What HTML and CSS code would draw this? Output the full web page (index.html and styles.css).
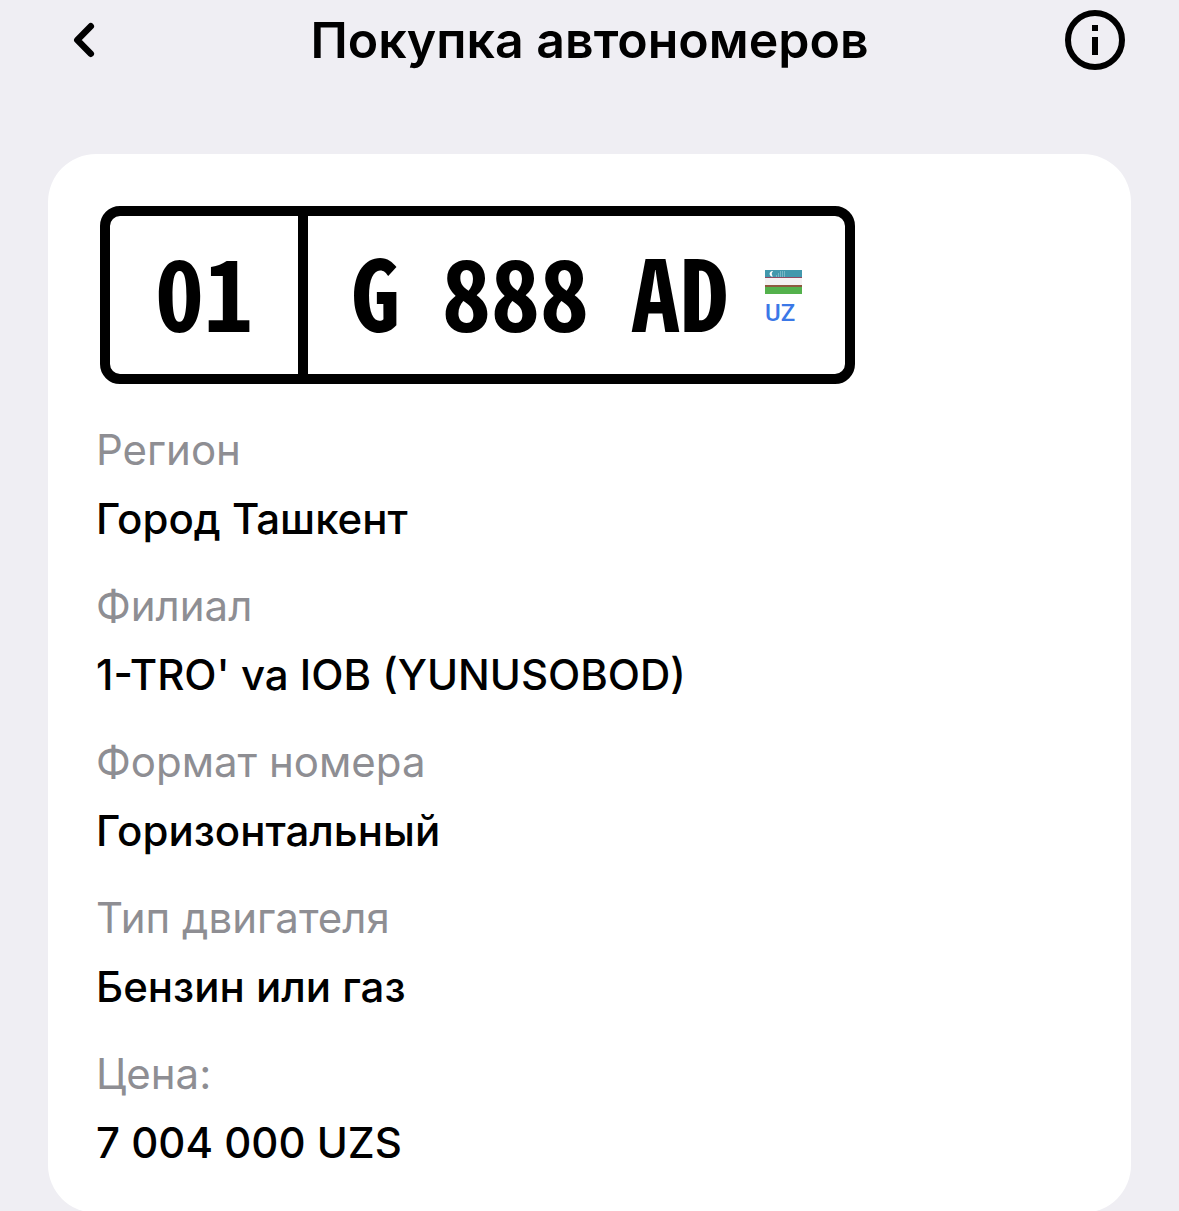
FILE: index.html
```html
<!DOCTYPE html>
<html lang="ru">
<head>
  <meta charset="UTF-8">
  <meta name="viewport" content="width=device-width, initial-scale=1">
  <title>Покупка автономеров</title>
  <link rel="stylesheet" href="styles.css">
</head>
<body>

<header class="topbar">
  <button class="icon-btn" type="button" aria-label="Назад">
    <svg width="60" height="60" viewBox="0 0 60 60" fill="none" stroke="#000" stroke-width="6.5" stroke-linecap="round" stroke-linejoin="round">
      <path d="M36.8 16.3L23.3 30L36.8 43.7"/>
    </svg>
  </button>
  <h1>Покупка автономеров</h1>
  <button class="icon-btn" type="button" aria-label="Информация">
    <svg width="60" height="60" viewBox="0 0 60 60">
      <circle cx="30" cy="30" r="27" fill="none" stroke="#000" stroke-width="6"/>
      <path d="M27 15h6v6h-6zM27 27h6v18h-6z"/>
    </svg>
  </button>
</header>

<main class="card">
  <div class="plate">
    <div class="plate-region">01</div>
    <div class="plate-number">
      <span class="plate-part">G</span>
      <span class="plate-part">888</span>
      <span class="plate-part">AD</span>
      <div class="plate-country">
        <svg width="37" height="24" viewBox="0 0 37 24">
          <rect width="37" height="24" fill="#f5f1f2"/>
          <rect width="37" height="7" fill="#4298ad"/>
          <rect y="7" width="37" height="1" fill="#8f4a63"/>
          <rect y="15" width="37" height="2" fill="#8e5a3f"/>
          <rect y="17" width="37" height="7" fill="#54b14c"/>
          <path d="M8 1.2a2.7 2.7 0 1 0 0 5.2a3.3 3.3 0 0 1 0-5.2z" fill="#fff"/>
          <path d="M15 2h6M13 4h8M11 6h10" stroke="#a9d3dd" stroke-width="1" stroke-dasharray="1 1"/>
        </svg>
        <span>UZ</span>
      </div>
    </div>
  </div>

  <dl class="details">
    <div class="row">
      <dt>Регион</dt>
      <dd>Город Ташкент</dd>
    </div>
    <div class="row">
      <dt>Филиал</dt>
      <dd>1-TRO' va IOB (YUNUSOBOD)</dd>
    </div>
    <div class="row">
      <dt>Формат номера</dt>
      <dd>Горизонтальный</dd>
    </div>
    <div class="row">
      <dt>Тип двигателя</dt>
      <dd>Бензин или газ</dd>
    </div>
    <div class="row">
      <dt>Цена:</dt>
      <dd>7 004 000 UZS</dd>
    </div>
  </dl>
</main>

</body>
</html>
```
FILE: styles.css
```css
* {
  box-sizing: border-box;
}

body {
  margin: 0;
  font-family: Inter, sans-serif;
  background-color: #efeef3;
  color: #000;
}

.topbar {
  display: flex;
  justify-content: space-between;
  align-items: center;
  height: 80px;
  padding: 0 54px;
  margin-bottom: 74px;
}

.topbar h1 {
  margin: 0;
  font-size: 50px;
  line-height: 60px;
  font-weight: 600;
}

.icon-btn {
  display: flex;
  width: 60px;
  height: 60px;
  padding: 0;
  border: none;
  background: none;
  cursor: pointer;
}

.card {
  margin: 0 48px;
  padding: 52px 48px 44px;
  background: #fff;
  border-radius: 48px;
}

.plate {
  display: flex;
  width: fit-content;
  margin-left: 4px;
  border: 10px solid #000;
  border-radius: 20px;
  font-family: "Noto Sans Mono CJK SC", "Noto Sans CJK SC", sans-serif;
  font-feature-settings: "hwid";
  font-size: 98px;
  line-height: 146px;
  font-weight: 700;
}

.plate-region {
  padding: 0 45px 12px;
  border-right: 10px solid #000;
}

.plate-number {
  display: flex;
  align-items: center;
  gap: 42px;
  padding: 0 43px;
}

.plate-part {
  padding-bottom: 12px;
}

.plate-country {
  display: flex;
  flex-direction: column;
  gap: 8px;
  margin-left: -6px;
  padding-top: 4px;
  font-family: Roboto, sans-serif;
  font-size: 24px;
  line-height: 22px;
  font-weight: 500;
  color: #3b78e7;
}

.details {
  display: flex;
  flex-direction: column;
  gap: 35px;
  margin: 40px 0 0;
  font-size: 42px;
  line-height: 52px;
}

.row {
  display: flex;
  flex-direction: column;
  gap: 17px;
}

.row dt {
  color: #8e8e93;
}

.row dd {
  margin: 0;
  font-weight: 500;
}
```
